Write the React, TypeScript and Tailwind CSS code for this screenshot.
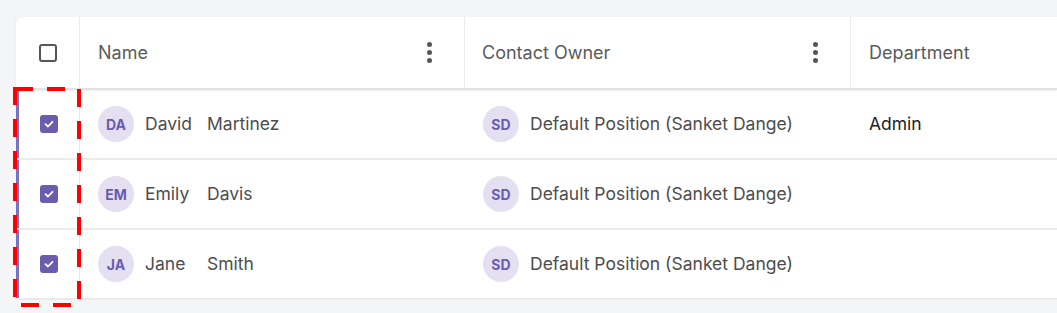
import React from "react";

type Row = {
    initials: string;
    first: string;
    last: string;
    department: string;
};

const rows: Row[] = [
    {initials: "DA", first: "David", last: "Martinez", department: "Admin"},
    {initials: "EM", first: "Emily", last: "Davis", department: ""},
    {initials: "JA", first: "Jane", last: "Smith", department: ""},
];

const font = {fontFamily: "Inter, 'Noto Sans', sans-serif"};

function Dots() {
    return (
        <div className="flex flex-col items-center gap-[3px]">
            <span className="block w-[5px] h-[5px] rounded-full bg-[#555]"/>
            <span className="block w-[5px] h-[5px] rounded-full bg-[#555]"/>
            <span className="block w-[5px] h-[5px] rounded-full bg-[#555]"/>
        </div>
    );
}

function CheckedBox() {
    return (
        <div className="w-[18px] h-[18px] rounded-[3px] bg-[#6b5cae] flex items-center justify-center">
            <svg width="12" height="12" viewBox="0 0 12 12" fill="none">
                <path d="M2.5 6.2 L5 8.5 L9.5 3.8" stroke="white" strokeWidth="1.8" strokeLinecap="round" strokeLinejoin="round"/>
            </svg>
        </div>
    );
}

function Avatar(props: {text: string}) {
    return (
        <div className="w-[36px] h-[36px] rounded-full bg-[#e4e0f2] flex items-center justify-center text-[14px] font-bold text-[#6a5bb2] shrink-0">
            {props.text}
        </div>
    );
}

export default function App() {
    return (
        <div className="w-[1057px] h-[313px] bg-[#f4f5f7] overflow-hidden pl-4 pt-[17px]" style={font}>
            <div className="relative bg-white rounded-tl-lg h-[283px]">
                {/* header */}
                <div className="grid grid-cols-[64px_385px_386px_1fr] h-[73px] border-b-2 border-[#e2e2e2] shadow-[0_1px_2px_rgba(0,0,0,0.08)]">
                    <div className="flex items-center justify-center border-r border-[#ececec] pl-[1px]">
                        <div className="w-[18px] h-[18px] rounded-[3px] border-2 border-[#555]"/>
                    </div>
                    <div className="flex items-center justify-between pl-[18px] pr-[32px] border-r border-[#ececec] text-[18px] text-[#5a5a5a]">
                        <span>Name</span>
                        <Dots/>
                    </div>
                    <div className="flex items-center justify-between pl-[17px] pr-[32px] border-r border-[#ececec] text-[18px] text-[#5a5a5a]">
                        <span>Contact Owner</span>
                        <Dots/>
                    </div>
                    <div className="flex items-center pl-[18px] text-[18px] text-[#5a5a5a]">
                        <span>Department</span>
                    </div>
                </div>

                {/* rows */}
                {rows.map((r) => (
                    <div key={r.initials} className="grid grid-cols-[64px_385px_386px_1fr] h-[70px] border-b-2 border-[#ebebeb]">
                        <div className="flex items-center justify-center border-l-[3px] border-l-[#7b70c4] border-r border-r-[#e6e6e6]">
                            <CheckedBox/>
                        </div>
                        <div className="flex items-center gap-[11px] pl-[18px] text-[17.5px] text-[#4d4d4d]">
                            <Avatar text={r.initials}/>
                            <span className="min-w-[51px]">{r.first}</span>
                            <span>{r.last}</span>
                        </div>
                        <div className="flex items-center gap-[11px] pl-[18px] text-[17.5px] text-[#4d4d4d]">
                            <Avatar text="SD"/>
                            <span>Default Position (Sanket Dange)</span>
                        </div>
                        <div className="flex items-center pl-[18px] text-[17.5px] text-[#222]">
                            {r.department}
                        </div>
                    </div>
                ))}

                {/* selection highlight */}
                <svg className="absolute left-[-3px] top-[70px] pointer-events-none" width="68" height="220">
                    <rect x="2" y="2" width="64" height="216" fill="none" stroke="#ff0000" strokeWidth="4" strokeDasharray="18 14"/>
                </svg>
            </div>
        </div>
    );
}
